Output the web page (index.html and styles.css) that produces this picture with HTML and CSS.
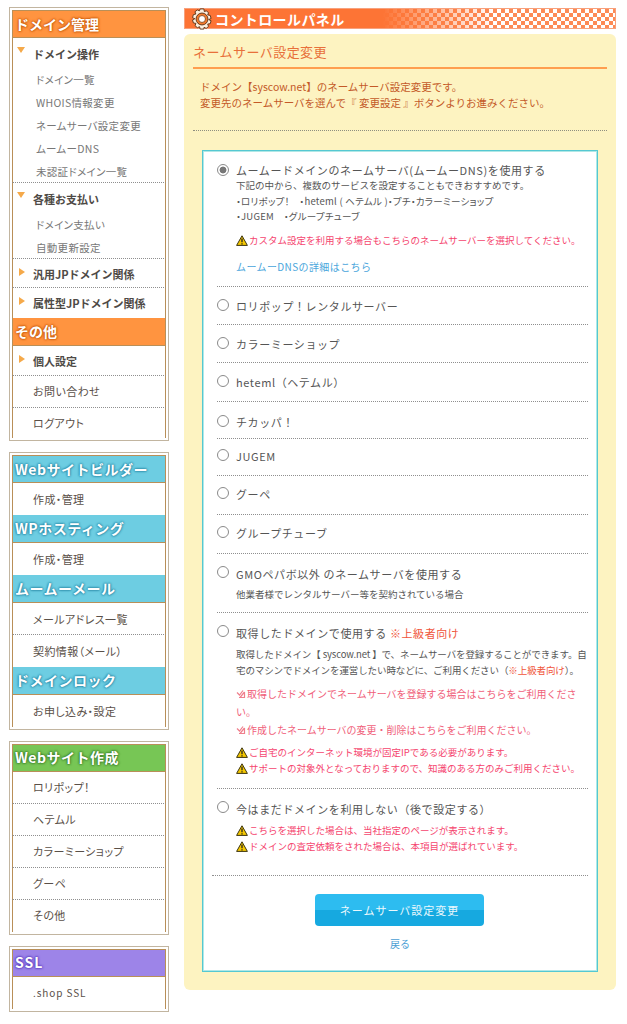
FILE: index.html
```html
<!DOCTYPE html>
<html lang="ja">
<head>
<meta charset="utf-8">
<title>コントロールパネル</title>
<link rel="stylesheet" href="styles.css">
</head>
<body>
<div class="page">
<aside class="side">
  <nav class="box box-1">
    <h2 class="hd orange">ドメイン管理</h2>
    <div class="grp grp-a">
      <p class="cat open">ドメイン操作</p>
      <ul class="sub"><li>ドメイン一覧</li><li>WHOIS情報変更</li><li>ネームサーバ設定変更</li><li>ムームーDNS</li><li>未認証ドメイン一覧</li></ul>
    </div>
    <div class="grp grp-b">
      <p class="cat open">各種お支払い</p>
      <ul class="sub"><li>ドメイン支払い</li><li>自動更新設定</li></ul>
    </div>
    <p class="cat closed rowline">汎用JPドメイン関係</p>
    <p class="cat closed rowlast">属性型JPドメイン関係</p>
    <h2 class="hd orange">その他</h2>
    <p class="cat closed rowline r30">個人設定</p>
    <p class="row">お問い合わせ</p>
    <p class="row last">ログアウト</p>
  </nav>
  <nav class="box box-2">
    <h2 class="hd blue">Webサイトビルダー</h2>
    <p class="row last">作成・管理</p>
    <h2 class="hd blue">WPホスティング</h2>
    <p class="row last">作成・管理</p>
    <h2 class="hd blue">ムームーメール</h2>
    <p class="row">メールアドレス一覧</p>
    <p class="row last">契約情報（メール）</p>
    <h2 class="hd blue">ドメインロック</h2>
    <p class="row last">お申し込み・設定</p>
  </nav>
  <nav class="box">
    <h2 class="hd green">Webサイト作成</h2>
    <p class="row">ロリポップ！</p>
    <p class="row">ヘテムル</p>
    <p class="row">カラーミーショップ</p>
    <p class="row">グーペ</p>
    <p class="row last">その他</p>
  </nav>
  <nav class="box">
    <h2 class="hd purple">SSL</h2>
    <p class="row last ssl">.shop SSL</p>
  </nav>
</aside>
<main class="main">
  <h1 class="band">
    <svg class="gear" width="22" height="22" viewBox="0 0 24 24"><path d="M10 1h4l.6 3 2-.9 2.6 2-1 2.400 2.800.6.9 3.400-2.600 1.100 2.600 1.300-.9 3.200-2.800.4.9 2.600-2.600 2.200-2.200-1.300L14 23h-4l-.7-2.600-2.300 1.100-2.600-2.200 1-2.500-2.800-.5L1.700 13l2.500-1.300L1.700 10.600l.9-3.400 2.700-.6-1-2.500 2.600-2 2.300 1z" fill="#fdf0df" stroke="#5a3217" stroke-width="1"/><circle cx="12" cy="12" r="6.500" fill="#f47a2c" stroke="#5a3217" stroke-width="1"/><circle cx="12" cy="12" r="3.800" fill="#fff" stroke="#8a4a1e" stroke-width="1"/></svg>
    <span>コントロールパネル</span>
  </h1>
  <section class="panel">
    <h2 class="title">ネームサーバ設定変更</h2>
    <div class="intro">
      <p>ドメイン【syscow.net】のネームサーバ設定変更です。</p>
      <p>変更先のネームサーバを選んで『 変更設定 』ボタンよりお進みください。</p>
    </div>
    <form class="card">
      <div class="opt o1">
        <label class="lab"><input type="radio" name="ns" checked><span>ムームードメインのネームサーバ(ムームーDNS)を使用する</span></label>
        <div class="desc">
          <p>下記の中から、複数のサービスを設定することもできおすすめです。</p>
          <p class="s">・ロリポップ！　・heteml ( ヘテムル )・プチ・カラーミーショップ</p>
          <p class="s">・JUGEM　・グループチューブ</p>
          <p class="warn w1"><svg class="tri" viewBox="0 0 12 11"><path d="M6 .8 11.400 10.400H.6z" fill="#f5c800" stroke="#3b3410" stroke-width="1" stroke-linejoin="round"/><path d="M6 3.500v3.800M6 8.200v1.200" stroke="#222" stroke-width="1.300"/></svg>カスタム設定を利用する場合もこちらのネームサーバーを選択してください。</p>
          <p class="link"><a href="#">ムームーDNSの詳細はこちら</a></p>
        </div>
      </div>
      <div class="opt p11 h38"><label class="lab"><input type="radio" name="ns"><span>ロリポップ！レンタルサーバー</span></label></div>
      <div class="opt p11 h38"><label class="lab"><input type="radio" name="ns"><span>カラーミーショップ</span></label></div>
      <div class="opt p11 h39"><label class="lab"><input type="radio" name="ns"><span>heteml（ヘテムル）</span></label></div>
      <div class="opt p12 h37"><label class="lab"><input type="radio" name="ns"><span>チカッパ！</span></label></div>
      <div class="opt p9 h37"><label class="lab"><input type="radio" name="ns"><span>JUGEM</span></label></div>
      <div class="opt p10 h39"><label class="lab"><input type="radio" name="ns"><span>グーペ</span></label></div>
      <div class="opt p10 h39"><label class="lab"><input type="radio" name="ns"><span>グループチューブ</span></label></div>
      <div class="opt p11 o9">
        <label class="lab"><input type="radio" name="ns"><span>GMOペパボ以外 のネームサーバを使用する</span></label>
        <div class="desc"><p class="s2">他業者様でレンタルサーバー等を契約されている場合</p></div>
      </div>
      <div class="opt p11 o10">
        <label class="lab"><input type="radio" name="ns"><span>取得したドメインで使用する <em>※上級者向け</em></span></label>
        <div class="desc">
          <p class="para">取得したドメイン【 syscow.net 】で、ネームサーバを登録することができます。自<br>宅のマシンでドメインを運営したい時などに、ご利用ください（<em>※上級者向け</em>）。</p>
          <p class="pink first"><svg class="arr" viewBox="0 0 10 10"><path d="M1 3.500 3.500 6 7 1.500M8.500 3v5.500H3M4 8.500 8.500 3" fill="none" stroke="#ef7f8c" stroke-width="1.200"/></svg>取得したドメインでネームサーバを登録する場合はこちらをご利用くださ<br>い。</p>
          <p class="pink"><svg class="arr" viewBox="0 0 10 10"><path d="M1 3.500 3.500 6 7 1.500M8.500 3v5.500H3M4 8.500 8.500 3" fill="none" stroke="#ef7f8c" stroke-width="1.200"/></svg>作成したネームサーバの変更・削除はこちらをご利用ください。</p>
          <p class="warn w2"><svg class="tri" viewBox="0 0 12 11"><path d="M6 .8 11.400 10.400H.6z" fill="#f5c800" stroke="#3b3410" stroke-width="1" stroke-linejoin="round"/><path d="M6 3.500v3.800M6 8.200v1.200" stroke="#222" stroke-width="1.300"/></svg>ご自宅のインターネット環境が固定IPである必要があります。</p>
          <p class="warn w2b"><svg class="tri" viewBox="0 0 12 11"><path d="M6 .8 11.400 10.400H.6z" fill="#f5c800" stroke="#3b3410" stroke-width="1" stroke-linejoin="round"/><path d="M6 3.500v3.800M6 8.200v1.200" stroke="#222" stroke-width="1.300"/></svg>サポートの対象外となっておりますので、知識のある方のみご利用ください。</p>
        </div>
      </div>
      <div class="opt p11 o11">
        <label class="lab"><input type="radio" name="ns"><span>今はまだドメインを利用しない（後で設定する）</span></label>
        <div class="desc">
          <p class="warn w3"><svg class="tri" viewBox="0 0 12 11"><path d="M6 .8 11.400 10.400H.6z" fill="#f5c800" stroke="#3b3410" stroke-width="1" stroke-linejoin="round"/><path d="M6 3.500v3.800M6 8.200v1.200" stroke="#222" stroke-width="1.300"/></svg>こちらを選択した場合は、当社指定のページが表示されます。</p>
          <p class="warn w4"><svg class="tri" viewBox="0 0 12 11"><path d="M6 .8 11.400 10.400H.6z" fill="#f5c800" stroke="#3b3410" stroke-width="1" stroke-linejoin="round"/><path d="M6 3.500v3.800M6 8.200v1.200" stroke="#222" stroke-width="1.300"/></svg>ドメインの査定依頼をされた場合は、本項目が選ばれています。</p>
        </div>
      </div>
      <div class="actions">
        <button type="button" class="btn">ネームサーバ設定変更</button>
        <a class="back" href="#">戻る</a>
      </div>
    </form>
  </section>
</main>
</div>
</body>
</html>
```
FILE: styles.css
```css
* { box-sizing: border-box; }
html, body { margin: 0; padding: 0; background: #fff; }
body { font-family: "Noto Sans CJK JP", "Liberation Sans", sans-serif; font-size: 11px; color: #555; }
p, ul, h1, h2 { margin: 0; padding: 0; font-weight: normal; }
ul { list-style: none; }
.page { display: flex; align-items: flex-start; padding: 7px 0 0 9px; gap: 15px; }
.side { width: 160px; flex: none; display: flex; flex-direction: column; gap: 11px; }
.box { border: 1px solid #c2b5a0; padding: 2px; background: #fff; }
.box > * { border-left: 1px solid #b98f58; border-right: 1px solid #b98f58; }
.box > :last-child { border-bottom: 2px solid #c2a26f; }
.box > :first-child { border-top: 1px solid #b98f58; }
.hd { height: 28px; line-height: 26px; padding-left: 2px; font-size: 14px; font-weight: bold; color: #fff; border-bottom: 1px solid #b98f58; }
.orange { background: #ff9440; text-shadow: 0 0 2px #c8590a, 0 0 2px #c8590a, 0 0 3px #c8590a; }
.blue { background: #6dcde2; text-shadow: 0 0 2px #2a8aa8, 0 0 2px #2a8aa8, 0 0 3px #2a8aa8; letter-spacing: .5px; }
.green { background: #77c655; text-shadow: 0 0 2px #3a7f2a, 0 0 2px #3a7f2a, 0 0 3px #3a7f2a; letter-spacing: .5px; line-height: 24px; }
.purple { background: #9d84e8; text-shadow: 0 0 2px #5a3fc0, 0 0 2px #5a3fc0, 0 0 3px #5a3fc0; letter-spacing: 1px; line-height: 24px; }
.row { height: 32px; line-height: 31px; padding-left: 20px; font-size: 11px; color: #5a5048; border-bottom: 1px dotted #8f8f8f; font-feature-settings: "palt"; letter-spacing: .4px; }
.row.last { border-bottom-style: none; }
.box-1 .row.last { height: 30px; }
.box-2 .row { line-height: 33px; }
.ssl.row { font-size: 10px; letter-spacing: .9px; padding-left: 20px; }
.cat { position: relative; padding-left: 20px; font-size: 11px; font-weight: bold; color: #4e4a46; line-height: 30px; }
.cat::before { content: ""; position: absolute; }
.cat.open::before { left: 4px; top: 8px; border-left: 4px solid transparent; border-right: 4px solid transparent; border-top: 6px solid #f5a94a; }
.cat.closed::before { left: 6px; top: 9px; border-top: 4px solid transparent; border-bottom: 4px solid transparent; border-left: 6px solid #f5a94a; }
.rowline { border-bottom: 1px dotted #8f8f8f; height: 29px; }
.rowlast { height: 30px; }
.r30 { height: 30px; }
.grp { border-bottom: 1px dotted #8f8f8f; padding-top: 1px; }
.grp-a { height: 145px; }
.grp-b { height: 76px; }
.sub { padding: 0 0 0 23px; font-size: 10.500px; color: #777; margin-top: -1px; font-feature-settings: "palt"; }
.sub li { height: 23px; line-height: 23px; letter-spacing: .3px; }

.main { width: 432px; flex: none; padding-top: 1px; }
.band { height: 21px; display: flex; align-items: center; gap: 2px; border: 1px solid #f7a17d;
  background:
    linear-gradient(to right, #fd7435 46%, rgba(253,116,53,.6) 56%, rgba(253,116,53,0) 72%),
    repeating-conic-gradient(#fd8a55 0 25%, #fff 0 50%) 0 0 / 8px 8px;
  color: #fff; font-size: 14px; font-weight: bold; letter-spacing: .4px; }
.gear { margin: -3px 0 -3px 6px; flex: none; }
.panel { margin-top: 5px; background: #fdf3c1; border-radius: 6px; padding: 8px 9px 19px; height: 956px; }
.title { font-size: 13px; color: #e8703a; letter-spacing: .45px; line-height: 19px; padding-bottom: 6px; border-bottom: 2px solid #ff9e4f; }
.intro { margin-top: 10px; padding: 0 0 19px 7px; font-size: 10.500px; line-height: 16px; color: #c45a28; border-bottom: 1px dotted #8f8f80; height: 52px; }
.card { margin: 19px 9px 0; background: #fff; border: 1px solid #55c8d2; box-shadow: inset 0 0 0 1px #b0e8e6; height: 822px; padding: 0 9px; display: flex; flex-direction: column; font-size: 11px; }
.opt { border-bottom: 1px dotted #8f8f8f; margin-left: 5px; }
.lab { display: flex; align-items: flex-start; line-height: 16px; letter-spacing: .6px; color: #555; }
.o1 .lab span { margin-top: -1px; }
.o9 .lab span, .o10 .lab span, .o11 .lab span { margin: 1px 0 -1px; }
.lab input { appearance: none; -webkit-appearance: none; margin: 1px 7px 0 0; width: 12px; height: 12px; border: 1px solid #8a8a8a; border-radius: 50%; background: #fff; flex: none; }
.lab input:checked { background: radial-gradient(circle, #777 0 3px, #fff 3.800px); }
.lab em, .para em { font-style: normal; color: #f0553a; }
.desc { padding-left: 19px; font-size: 9.500px; color: #555; }
.o1 { height: 136px; padding-top: 12px; }
.p9 { padding-top: 9px; }
.p10 { padding-top: 10px; }
.p11 { padding-top: 11px; }
.p12 { padding-top: 12px; }
.h38 { height: 38px; }
.h39 { height: 39px; }
.h37 { height: 37px; }
.o9 { height: 59px; }
.o10 { height: 176px; }
.o11 { height: 87px; margin-left: 0; padding-left: 5px; }
.o1 .desc p { line-height: 15.500px; }
.s { font-size: 9.500px; font-feature-settings: "palt"; letter-spacing: .25px; }
.s2 { margin-top: 6px; }
.warn { display: flex; align-items: center; color: #f5456e; line-height: 15px; white-space: nowrap; }
.o1 .desc .w1 { margin-top: 8px; }
.link { margin-top: 11px; }
.link a { color: #4aa6dc; text-decoration: none; font-size: 10px; letter-spacing: .4px; }
.tri { width: 12px; height: 11px; margin-right: 1px; flex: none; }
.para { line-height: 16px; margin-top: 6px; white-space: nowrap; letter-spacing: -.1px; }
.pink { color: #f0607a; font-size: 10px; line-height: 18px; white-space: nowrap; }
.pink.first { margin-top: 7px; }
.arr { width: 10px; height: 10px; margin-right: 1px; vertical-align: -1px; }
.w2 { margin-top: 6px; }
.w2b { margin-top: 1px; }
.w3 { margin-top: 7px; }
.w4 { margin-top: 1px; }
.actions { display: flex; flex-direction: column; align-items: center; padding-top: 18px; }
.btn { width: 169px; height: 32px; border: 0; border-radius: 4px; margin-right: 1px; background: linear-gradient(#2dbcf0 0 50%, #16a9e0 50%); color: #eaf8fd; font: 11px "Noto Sans CJK JP", sans-serif; letter-spacing: 1px; }
.back { margin-top: 10px; font-size: 10px; color: #4a9ed4; text-decoration: none; }
```
